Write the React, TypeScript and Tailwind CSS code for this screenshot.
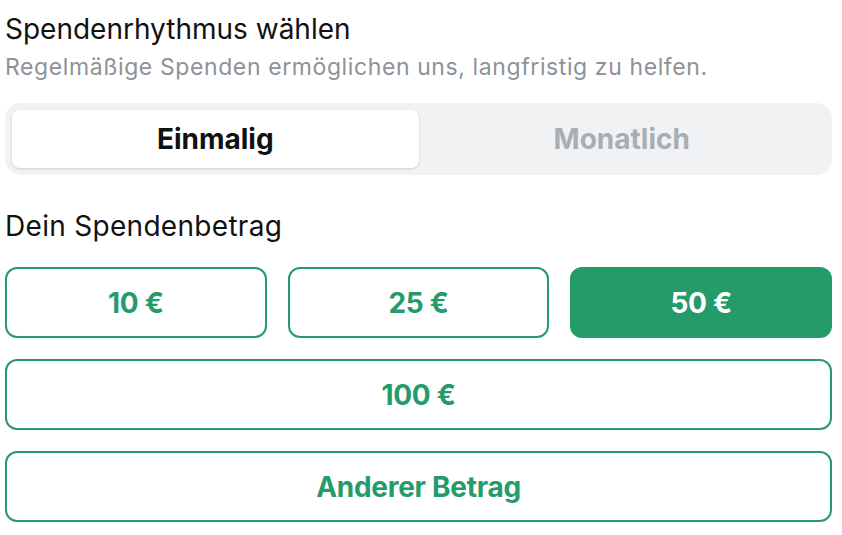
import React, { useState } from "react";

const amounts = ["10 €", "25 €", "50 €"];

export default function App() {
  const [mode, setMode] = useState<"once" | "monthly">("once");
  const [amount, setAmount] = useState("50 €");

  const btn = (label: string, extra = "") => {
    const active = amount === label;
    return (
      <button
        key={label}
        onClick={() => setAmount(label)}
        className={
          "h-[71px] rounded-[12px] border-2 text-[28px] font-bold tracking-[-0.01em] flex items-center justify-center " +
          (active
            ? "bg-[#259b6a] border-[#259b6a] text-white "
            : "bg-white border-[#259b6a] text-[#259b6a] ") +
          extra
        }
      >
        {label}
      </button>
    );
  };

  return (
    <div
      className="w-[842px] h-[535px] bg-white pl-[5px] pr-[10px] pt-[12px]"
      style={{ fontFamily: "Inter, 'Noto Sans', sans-serif" }}
    >
      <h1 className="text-[28px] leading-[34px] text-[#111111] font-normal">
        Spendenrhythmus wählen
      </h1>
      <p className="text-[23px] leading-[30px] tracking-[0.6px] text-[#8d9299] mt-[6px]">
        Regelmäßige Spenden ermöglichen uns, langfristig zu helfen.
      </p>

      <div className="mt-[21px] h-[72px] rounded-[16px] bg-[#f1f2f4] p-[7px] grid grid-cols-2">
        <button
          onClick={() => setMode("once")}
          className={
            "rounded-[8px] text-[28px] font-bold flex items-center justify-center " +
            (mode === "once"
              ? "bg-white text-[#111111] shadow-[0_1px_3px_rgba(0,0,0,0.15)]"
              : "text-[#a9aeb4]")
          }
        >
          Einmalig
        </button>
        <button
          onClick={() => setMode("monthly")}
          className={
            "rounded-[8px] text-[28px] font-bold flex items-center justify-center " +
            (mode === "monthly"
              ? "bg-white text-[#111111] shadow-[0_1px_3px_rgba(0,0,0,0.15)]"
              : "text-[#a9aeb4]")
          }
        >
          Monatlich
        </button>
      </div>

      <h2 className="mt-[34px] text-[28px] leading-[34px] tracking-[0.3px] text-[#111111] font-normal">
        Dein Spendenbetrag
      </h2>

      <div className="mt-[24px] flex flex-col gap-[21px]">
        <div className="grid grid-cols-3 gap-[21px]">
          {amounts.map((a) => btn(a))}
        </div>
        {btn("100 €")}
        {btn("Anderer Betrag")}
      </div>
    </div>
  );
}
